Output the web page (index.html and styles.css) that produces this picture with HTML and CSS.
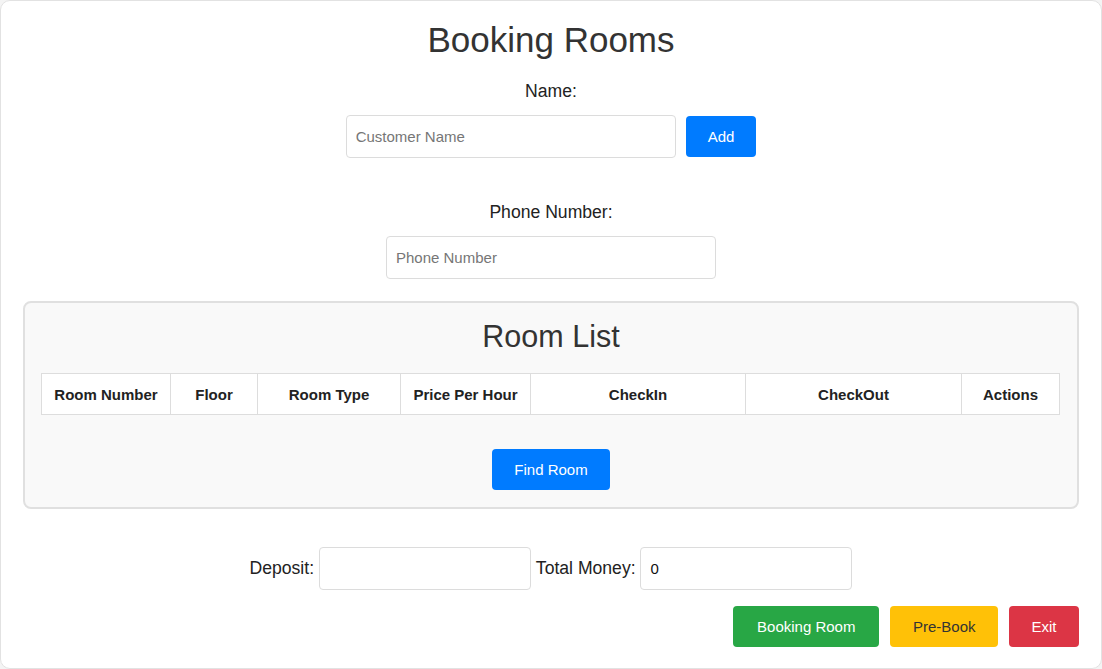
FILE: index.html
```html
<!DOCTYPE html>
<html>
<head>
<meta charset="utf-8">
<title>Booking Rooms</title>
<link rel="stylesheet" href="styles.css">
</head>
<body>
<div class="container">
  <h1 class="title">Booking Rooms</h1>
  <label class="field-label">Name:</label>
  <div class="row name-row">
    <input class="text-input" type="text" placeholder="Customer Name">
    <button class="btn btn-blue">Add</button>
  </div>
  <label class="field-label phone-label">Phone Number:</label>
  <div class="row">
    <input class="text-input" type="text" placeholder="Phone Number">
  </div>

  <div class="panel">
    <h2 class="panel-title">Room List</h2>
    <table class="room-table">
      <colgroup>
        <col style="width:129px">
        <col style="width:87px">
        <col style="width:143px">
        <col style="width:130px">
        <col style="width:215px">
        <col style="width:216px">
        <col style="width:98px">
      </colgroup>
      <thead>
        <tr>
          <th>Room Number</th>
          <th>Floor</th>
          <th>Room Type</th>
          <th>Price Per Hour</th>
          <th>CheckIn</th>
          <th>CheckOut</th>
          <th>Actions</th>
        </tr>
      </thead>
    </table>
    <div class="row find-row">
      <button class="btn btn-blue">Find Room</button>
    </div>
  </div>

  <div class="money-row">
    <label class="money-label">Deposit:</label> <input class="money-input" type="text"> <label class="money-label">Total Money:</label> <input class="money-input" type="text" value="0">
  </div>

  <div class="actions">
    <button class="btn btn-green">Booking Room</button>
    <button class="btn btn-yellow">Pre-Book</button>
    <button class="btn btn-red">Exit</button>
  </div>
</div>
</body>
</html>
```

FILE: styles.css
```css
* { box-sizing: border-box; }
html, body {
  margin: 0;
  padding: 0;
  background: #f4f4f4;
  font-family: "Liberation Sans", Arial, sans-serif;
}
.container {
  width: 1102px;
  height: 669px;
  background: #fff;
  border: 1px solid #e2e2e2;
  border-radius: 10px;
  padding: 19px 22px 20px 22px;
  display: flex;
  flex-direction: column;
  align-items: center;
}
.title {
  margin: 0;
  font-size: 35px;
  font-weight: normal;
  line-height: 40px;
  color: #333;
}
.field-label {
  margin-top: 21px;
  font-size: 17.6px;
  line-height: 20px;
  color: #222;
}
.phone-label { margin-top: 44px; }
.row {
  display: flex;
  align-items: center;
  justify-content: center;
  gap: 10px;
  margin-top: 14px;
}
.text-input {
  width: 330px;
  height: 43px;
  border: 1px solid #dcdcdc;
  border-radius: 4px;
  padding: 0 9px;
  font-size: 15px;
  font-family: "Liberation Sans", Arial, sans-serif;
  color: #222;
}
.text-input::placeholder { color: #767676; }
.btn {
  height: 41px;
  border: none;
  border-radius: 4px;
  padding: 0 22px;
  font-size: 15px;
  font-family: "Liberation Sans", Arial, sans-serif;
  color: #fff;
  cursor: pointer;
}
.btn-blue { background: #007bff; }
.btn-green { background: #28a745; }
.btn-yellow { background: #ffc107; color: #333; }
.btn-red { background: #dc3545; }

.panel {
  align-self: stretch;
  margin-top: 22px;
  border: 2px solid #e0e0e0;
  border-radius: 8px;
  background: #f9f9f9;
  padding: 15px 16px 17px 16px;
  display: flex;
  flex-direction: column;
  align-items: flex-start;
}
.panel-title {
  align-self: center;
  margin: 0;
  font-size: 30.5px;
  font-weight: normal;
  line-height: 36px;
  color: #333;
}
.room-table {
  margin-top: 19px;
  width: 1018px;
  table-layout: fixed;
  border-collapse: collapse;
  background: #fff;
}
.room-table th {
  height: 41px;
  border: 1px solid #dddddd;
  font-size: 15px;
  font-weight: bold;
  color: #222;
  text-align: center;
  padding: 0 6px;
}
.find-row {
  align-self: stretch;
  margin-top: 34px;
}

.money-row {
  margin-top: 37px;
  font-size: 17.6px;
  color: #222;
  text-align: center;
  line-height: 43px;
}
.money-label { vertical-align: middle; }
.money-input {
  width: 212px;
  height: 43px;
  border: 1px solid #dcdcdc;
  border-radius: 4px;
  padding: 0 9px;
  font-size: 15px;
  font-family: "Liberation Sans", Arial, sans-serif;
  color: #111;
  vertical-align: middle;
}
.actions {
  align-self: stretch;
  display: flex;
  justify-content: flex-end;
  gap: 11px;
  margin-top: 16px;
}
.actions .btn { padding: 0 22.5px; }
.actions .btn-green { padding: 0 24px; }
```
